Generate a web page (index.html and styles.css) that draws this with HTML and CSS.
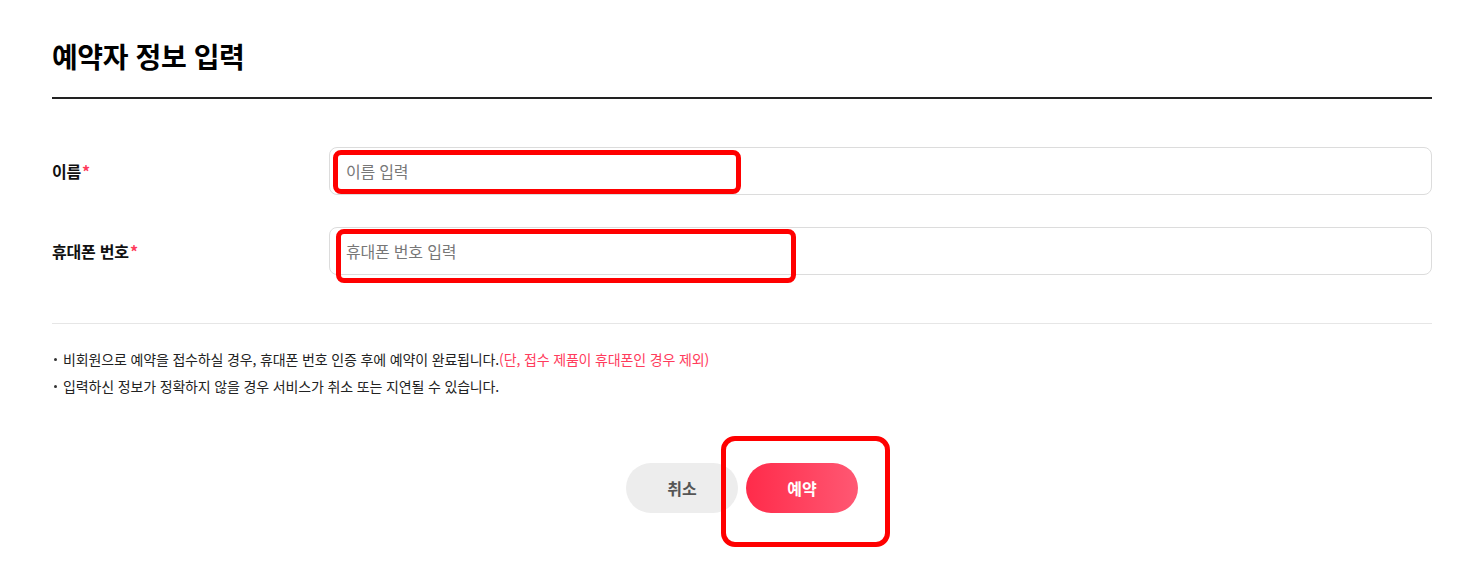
FILE: index.html
```html
<!DOCTYPE html>
<html lang="ko">
<head>
<meta charset="utf-8">
<title>예약자 정보 입력</title>
<link rel="stylesheet" href="styles.css">
</head>
<body>
<div class="page">
  <header class="head">
    <h2 class="title">예약자 정보 입력</h2>
  </header>
  <div class="form">
    <div class="row">
      <label class="label">이름<span class="req">*</span></label>
      <div class="field"><input class="input" type="text" placeholder="이름 입력"></div>
    </div>
    <div class="row">
      <label class="label">휴대폰 번호<span class="req">*</span></label>
      <div class="field"><input class="input" type="text" placeholder="휴대폰 번호 입력"></div>
    </div>
  </div>
  <ul class="notes">
    <li>비회원으로 예약을 접수하실 경우, 휴대폰 번호 인증 후에 예약이 완료됩니다.<span class="pink">(단, 접수 제품이 휴대폰인 경우 제외)</span></li>
    <li>입력하신 정보가 정확하지 않을 경우 서비스가 취소 또는 지연될 수 있습니다.</li>
  </ul>
  <div class="actions">
    <button class="btn btn-cancel" type="button">취소</button>
    <button class="btn btn-ok" type="button">예약</button>
  </div>
  <div class="mark mark-1"></div>
  <div class="mark mark-2"></div>
  <div class="mark mark-3"></div>
</div>
</body>
</html>
```
FILE: styles.css
```css
* { box-sizing: border-box; }
html, body { margin: 0; padding: 0; background: #fff; }
body {
  font-family: "Noto Sans CJK KR", "Noto Sans", sans-serif;
  color: #111;
}
.page {
  position: relative;
  padding: 38px 30px 40px 52px;
  min-height: 566px;
}
.head {
  padding-bottom: 22px;
  border-bottom: 2px solid #222;
}
.title {
  margin: 0;
  font-size: 28px;
  line-height: 37px;
  font-weight: 700;
  color: #000;
  letter-spacing: -0.4px;
}
.form {
  padding: 48px 0 48px;
  border-bottom: 1px solid #e6e6e6;
  display: flex;
  flex-direction: column;
  gap: 32px;
}
.row {
  display: grid;
  grid-template-columns: 277px 1fr;
  align-items: center;
}
.label {
  font-size: 16px;
  font-weight: 700;
  color: #111;
  letter-spacing: -0.2px;
}
.req { color: #ff3b5c; margin-left: 1px; }
.input {
  display: block;
  width: 100%;
  height: 48px;
  border: 1px solid #dcdcdc;
  border-radius: 8px;
  padding: 0 16px;
  font-family: inherit;
  font-size: 16px;
  letter-spacing: -0.2px;
  color: #111;
  background: #fff;
  outline: none;
}
.input::placeholder { color: #777; }
.notes {
  list-style: none;
  margin: 0;
  padding: 22px 0 0;
  font-size: 14px;
  line-height: 27px;
  color: #222;
  letter-spacing: -0.15px;
}
.notes li { position: relative; padding-left: 11px; }
.notes li::before {
  content: "";
  position: absolute;
  left: 2px;
  top: 12px;
  width: 3px;
  height: 3px;
  background: #333;
  border-radius: 50%;
}
.pink { color: #ff3b5c; }
.actions {
  margin-top: 63px;
  display: flex;
  justify-content: center;
  gap: 8px;
}
.btn {
  width: 112px;
  height: 50px;
  border: none;
  border-radius: 25px;
  font-family: inherit;
  font-size: 16px;
  font-weight: 700;
  cursor: pointer;
}
.btn-cancel { background: #ededed; color: #555; }
.btn-ok {
  background: linear-gradient(90deg, #ff2b4a 0%, #ff5873 100%);
  color: #fff;
}
.mark {
  position: absolute;
  border: 5px solid #ff0000;
  pointer-events: none;
}
.mark-1 { left: 333px; top: 150px; width: 408px; height: 44px; border-radius: 8px; }
.mark-2 { left: 336px; top: 229px; width: 460px; height: 54px; border-radius: 8px; }
.mark-3 { left: 721px; top: 436px; width: 169px; height: 111px; border-radius: 14px; }
```
